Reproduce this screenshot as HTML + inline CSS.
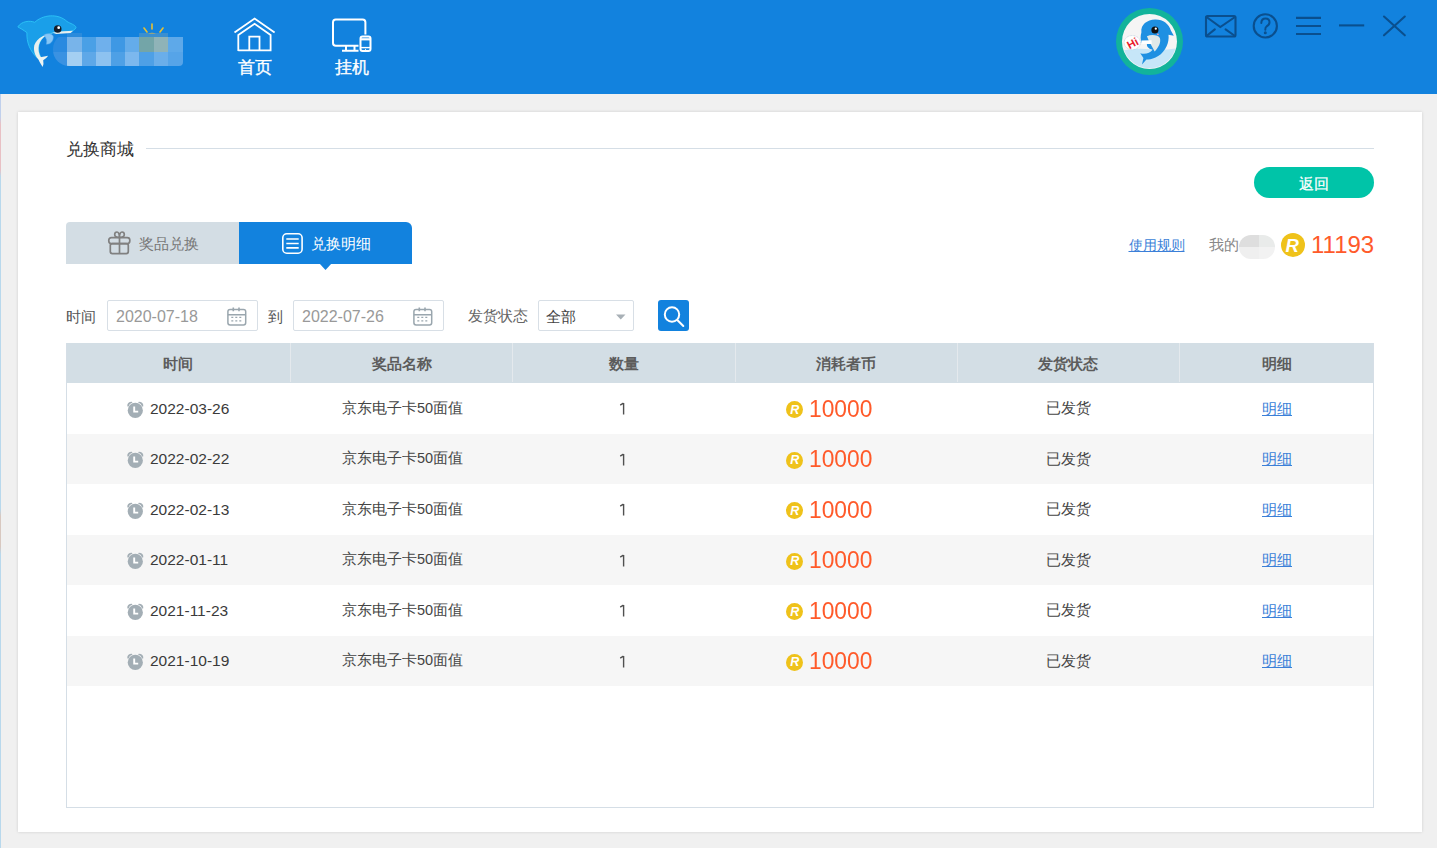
<!DOCTYPE html><html><head><meta charset="utf-8"><style>
*{box-sizing:border-box;margin:0;padding:0}
html,body{width:1437px;height:848px;overflow:hidden;background:#f0f0f0;font-family:"Liberation Sans",sans-serif;color:#333}
#hdr{position:absolute;left:0;top:0;width:1437px;height:94px;background:#1282de}
#card{position:absolute;left:18px;top:112px;width:1404px;height:720px;background:#fff;box-shadow:0 0 3px rgba(0,0,0,.14)}
.t{position:absolute;white-space:nowrap;line-height:1}
.a{position:absolute}
svg{position:absolute;overflow:visible}
.tbl{position:absolute;left:66px;top:343px;width:1308px;height:465px;border:1px solid #d5dee6;border-top:none;background:#fff;overflow:hidden}
.th{position:absolute;left:-1px;top:0;width:1308px;height:40px;background:#d3dee5}
.sep{position:absolute;top:0;width:1px;height:39px;background:#e4e9ed}
.hc{position:absolute;top:1px;height:40px;line-height:40px;text-align:center;font-size:14.6px;font-weight:bold;color:#5c5c5c}
.row{position:absolute;left:-1px;width:1308px}
.mz{position:absolute;top:37px;height:15px;width:15px}
</style></head><body>
<div id="hdr"></div>
<div class="a" style="left:0;top:94px;width:1px;height:754px;background:linear-gradient(#c0d0ec 0,#c0d0ec 3%,#e8c0c4 4%,#e8c0c4 10%,#b8d8ec 11%,#b8d8ec 55%,#d8c8c0 56%,#d8c8c0 60%,#b8d8ec 61%)"></div>
<div class="a" style="left:53px;top:33px;width:130px;height:33px;border-radius:16px 4px 4px 16px;overflow:hidden">
<div class="a" style="left:0px;top:4px;width:14px;height:15px;background:#2a8ae0"></div>
<div class="a" style="left:0px;top:19px;width:14px;height:14px;background:#3a92e2"></div>
<div class="a" style="left:14px;top:4px;width:15px;height:15px;background:#78b4ea"></div>
<div class="a" style="left:14px;top:19px;width:15px;height:14px;background:#a4cff2"></div>
<div class="a" style="left:29px;top:4px;width:14px;height:15px;background:#4aa0e6"></div>
<div class="a" style="left:29px;top:19px;width:14px;height:14px;background:#5ea8e8"></div>
<div class="a" style="left:43px;top:4px;width:15px;height:15px;background:#6fb0ec"></div>
<div class="a" style="left:43px;top:19px;width:15px;height:14px;background:#8dc2f0"></div>
<div class="a" style="left:58px;top:4px;width:14px;height:15px;background:#3e98e4"></div>
<div class="a" style="left:58px;top:19px;width:14px;height:14px;background:#4ea0e6"></div>
<div class="a" style="left:72px;top:4px;width:14px;height:15px;background:#64acea"></div>
<div class="a" style="left:72px;top:19px;width:14px;height:14px;background:#7cb8ee"></div>
<div class="a" style="left:86px;top:4px;width:15px;height:15px;background:#73a5a8"></div>
<div class="a" style="left:86px;top:19px;width:15px;height:14px;background:#4ea0e6"></div>
<div class="a" style="left:101px;top:4px;width:14px;height:15px;background:#8fb3b8"></div>
<div class="a" style="left:101px;top:19px;width:14px;height:14px;background:#6aaeea"></div>
<div class="a" style="left:115px;top:4px;width:15px;height:15px;background:#5ea9e9"></div>
<div class="a" style="left:115px;top:19px;width:15px;height:14px;background:#56a4e8"></div>
<div class="a" style="left:14px;top:0;width:15px;height:4px;background:#2b8bdc"></div>
<div class="a" style="left:86px;top:0;width:29px;height:4px;background:#3a8fd0"></div>
</div>
<svg style="left:140px;top:21px" width="30" height="20" viewBox="0 0 30 20"><g stroke="#e8c030" stroke-width="1.6" stroke-linecap="round"><line x1="12" y1="3" x2="12" y2="8"/><line x1="4" y1="7" x2="7" y2="11"/><line x1="20" y1="11" x2="23" y2="7"/></g><path d="M8 13 Q12 10 16 13" fill="#d0b050" opacity=".6"/></svg>
<svg style="left:10px;top:5px" width="90" height="70" viewBox="0 0 1090 848"><path d="M95 265 C140 195 240 185 300 210 C390 120 580 95 690 200 C730 225 790 240 800 270 C790 310 740 320 700 325 L540 335 C430 345 350 420 345 520 C345 590 370 630 395 660 L340 650 C240 560 200 450 205 335 C160 300 120 280 95 265 Z" fill="#1a9fe9" stroke="#2ac0f5" stroke-width="12" stroke-linejoin="round"/><path d="M750 318 L545 333 C430 345 350 420 345 520 C345 590 370 630 395 660 L355 662 C320 640 290 590 290 520 C290 430 400 350 520 338 L600 330 C650 325 700 322 750 318 Z" fill="#e8f0ee"/><path d="M335 640 L462 615 Q440 650 402 668 Q412 712 395 750 Q358 700 335 640 Z" fill="#eef4f2"/><path d="M408 365 C450 335 520 345 525 385 C525 440 490 478 440 475 C452 432 442 395 408 365 Z" fill="#86c6f6" stroke="#5aa8e8" stroke-width="6"/><path d="M520 335 L600 322 L765 312 L735 340 L560 352 Z" fill="#e8f0ee"/><circle cx="578" cy="290" r="46" fill="#141c28"/><circle cx="590" cy="275" r="17" fill="#fff"/></svg>
<svg style="left:225px;top:10px" width="60" height="50" viewBox="0 0 60 50" fill="none" stroke="#fff" stroke-width="1.8"><path d="M9.5 22.6 L29.6 8.6 L49.6 22.6"/><path d="M13.3 41 V25 L29.6 13.8 L45.6 25 V40.3 H13.3"/><path d="M24.3 40.3 V26.6 H34.5 V40.3"/></svg>
<div class="t" style="left:237.5px;top:59px;font-size:17.3px;color:#fff;-webkit-text-stroke:.35px #fff">首页</div>
<svg style="left:320px;top:10px" width="65" height="50" viewBox="0 0 65 50" fill="none" stroke="#fff" stroke-width="2"><path d="M45.4 24.5 V12.3 Q45.4 9.5 42.6 9.5 H15.8 Q13 9.5 13 12.3 V33 Q13 35.8 15.8 35.8 H38.5"/><path d="M26 36 V40.3 M34.5 36 V40.3 M22 40.8 H38.5"/><rect x="40.5" y="26.5" width="10" height="14.5" rx="2"/><path d="M40.5 29.3 H50.5" stroke-width="2.2"/><path d="M40.5 37.6 H50.5" stroke-width="1.4"/><circle cx="45.5" cy="39.3" r=".6" fill="#fff" stroke="none"/></svg>
<div class="t" style="left:334.5px;top:59px;font-size:17.3px;color:#fff;-webkit-text-stroke:.35px #fff">挂机</div>
<div class="a" style="left:1116px;top:8px;width:67px;height:67px;border-radius:50%;background:#12b39b"></div>
<div class="a" style="left:1122px;top:14px;width:55px;height:55px;border-radius:50%;background:#f5f5f5"></div>
<svg style="left:1110px;top:5px" width="80" height="75" viewBox="0 0 905 848"><defs><clipPath id="av"><circle cx="447" cy="410" r="305"/></clipPath></defs><g clip-path="url(#av)"><path d="M100 520 Q300 480 450 500 Q600 520 800 480 L800 800 L100 800 Z" fill="#c6e6f8"/></g><path d="M355 310 C345 220 420 170 510 165 C600 162 665 215 690 290 L722 348 L662 335 C672 425 630 520 545 578 C495 610 445 622 412 615 L362 672 L378 598 L342 545 C400 565 452 540 482 505 C440 500 412 472 418 442 L362 432 C340 390 345 345 355 310 Z" fill="#1e90e2"/><path d="M418 352 C470 330 550 338 565 375 C578 420 550 480 505 525 C480 470 440 420 418 352 Z" fill="#dfe9e9"/><path d="M355 402 L470 398 L472 440 L360 440 Z" fill="#fff"/><circle cx="508" cy="282" r="40" fill="#111"/><circle cx="518" cy="268" r="13" fill="#fff"/><circle cx="542" cy="332" r="10" fill="#f4a0b0"/><ellipse cx="252" cy="425" rx="92" ry="80" fill="#fff" stroke="#8fb0c8" stroke-width="5" stroke-dasharray="10 7"/><text x="190" y="478" font-family="Liberation Sans" font-weight="bold" font-size="125" fill="#e81c2c" transform="rotate(-28 252 425)">Hi</text></svg>
<svg style="left:1195px;top:5px" width="230" height="40" viewBox="0 0 230 40" fill="none" stroke="#0a4f8e" stroke-width="2.1" stroke-linecap="round"><rect x="11" y="11" width="29.5" height="20.5" rx="1.5"/><path d="M11.5 12 L25.3 22 L40 12 M11.5 31 L19.8 24.4 M40 31 L30.6 24.4"/><circle cx="70.3" cy="20.9" r="11.6"/><path d="M66.3 18 Q66.5 13.5 70.5 13.5 Q74.5 13.5 74.5 17.3 Q74.5 20 71.5 21.5 Q70.3 22.3 70.3 24.8" stroke-width="2"/><circle cx="70.3" cy="27.8" r="0.6" fill="#0a4f8e" stroke-width="1.8"/><path d="M101 12.9 H126 M101 21 H126 M101 29 H126" stroke-linecap="butt"/><path d="M144 20.4 H169.2" stroke-linecap="butt"/><path d="M189 11.5 L209.8 30.3 M209.8 11.5 L189 30.3"/></svg>
<div id="card"></div>
<div class="t" style="left:66px;top:141px;font-size:16.5px;color:#333">兑换商城</div>
<div class="a" style="left:146px;top:148px;width:1228px;height:1px;background:#d5dee6"></div>
<div class="a" style="left:1254px;top:167px;width:120px;height:31px;border-radius:16px;background:#00c4a8"></div>
<div class="t" style="left:1299px;top:177px;font-size:14.6px;color:#fff;-webkit-text-stroke:.25px #fff">返回</div>
<div class="a" style="left:66px;top:222px;width:173px;height:42px;background:#d3dde4;border-radius:4px 0 0 0"></div>
<div class="a" style="left:239px;top:222px;width:173px;height:42px;background:#1282de;border-radius:0 6px 0 0"></div>
<svg style="left:319px;top:263px" width="13" height="7" viewBox="0 0 13 7"><path d="M0 0 H13 L6.5 7 Z" fill="#1282de"/></svg>
<svg style="left:105px;top:229px" width="30" height="28" viewBox="0 0 30 28" fill="none" stroke="#808080" stroke-width="1.7"><rect x="3.8" y="8.6" width="21" height="6" rx="2.5"/><rect x="5.3" y="14.6" width="18" height="10" rx="2"/><path d="M14.5 8.6 V24.6"/><path d="M14.3 8.4 C11 8.4 9.7 7 9.7 5.5 C9.7 3.8 11 3 12 3 C13.6 3 14.3 4.5 14.4 8.4 C14.6 4.5 15.4 3 17 3 C18 3 19.3 3.8 19.3 5.5 C19.3 7 18 8.4 14.6 8.4"/></svg>
<div class="t" style="left:139px;top:236px;font-size:15px;color:#777">奖品兑换</div>
<svg style="left:280px;top:231px" width="26" height="26" viewBox="0 0 26 26" fill="none" stroke="#fff" stroke-width="1.6"><rect x="2.8" y="2.8" width="19.3" height="19.4" rx="4"/><path d="M6.3 8 H18.7 M6.3 12.5 H18.7 M6.3 16.8 H18.7" stroke-width="1.7"/></svg>
<div class="t" style="left:311px;top:236px;font-size:15px;color:#fff">兑换明细</div>
<div class="t" style="left:1128.5px;top:237.5px;font-size:14.2px;color:#3b7fd8;text-decoration:underline">使用规则</div>
<div class="t" style="left:1209px;top:237px;font-size:15.3px;color:#888">我的</div>
<div class="a" style="left:1239px;top:235px;width:36px;height:24px;border-radius:12px;overflow:hidden;filter:blur(.6px)"><div class="a" style="left:0;top:0;width:20px;height:12px;background:#dedede"></div><div class="a" style="left:20px;top:0;width:16px;height:12px;background:#e9ebea"></div><div class="a" style="left:0;top:12px;width:20px;height:12px;background:#efefef"></div><div class="a" style="left:20px;top:12px;width:16px;height:12px;background:#f2f2f2"></div></div>
<div class="a" style="left:1281px;top:233px;width:24px;height:24px;border-radius:50%;background:#efc21a"></div>
<div class="t" style="left:1285.5px;top:236.5px;font-size:18.5px;color:#fff;font-weight:bold;font-style:italic">R</div>
<div class="t" style="left:1311px;top:232.5px;font-size:24px;color:#ff5a2a">11193</div>
<div class="t" style="left:66px;top:308.5px;font-size:15px;color:#555">时间</div>
<div class="a" style="left:107px;top:300px;width:151px;height:31px;border:1px solid #d8dfe6;border-radius:2px;background:#fff"></div>
<div class="t" style="left:116px;top:308.5px;font-size:16px;color:#999">2020-07-18</div>
<svg style="left:227px;top:307px" width="20" height="19" viewBox="0 0 20 19" fill="none" stroke="#9aa6ae" stroke-width="1.5"><rect x="0.9" y="2.4" width="17.8" height="15.6" rx="2.2"/><path d="M0.9 7.8 H18.7 M6.3 0.5 V4.2 M12 0.5 V4.2" stroke-width="1.6"/><path d="M4.3 10.4 H6.3 M8.3 10.4 H10.3 M12.3 10.4 H14.3 M4.3 13.8 H6.3 M8.3 13.8 H10.3 M12.3 13.8 H14.3" stroke-width="1.3"/></svg>
<div class="a" style="left:293px;top:300px;width:151px;height:31px;border:1px solid #d8dfe6;border-radius:2px;background:#fff"></div>
<div class="t" style="left:302px;top:308.5px;font-size:16px;color:#999">2022-07-26</div>
<svg style="left:413px;top:307px" width="20" height="19" viewBox="0 0 20 19" fill="none" stroke="#9aa6ae" stroke-width="1.5"><rect x="0.9" y="2.4" width="17.8" height="15.6" rx="2.2"/><path d="M0.9 7.8 H18.7 M6.3 0.5 V4.2 M12 0.5 V4.2" stroke-width="1.6"/><path d="M4.3 10.4 H6.3 M8.3 10.4 H10.3 M12.3 10.4 H14.3 M4.3 13.8 H6.3 M8.3 13.8 H10.3 M12.3 13.8 H14.3" stroke-width="1.3"/></svg>
<div class="t" style="left:268px;top:308.5px;font-size:15px;color:#555">到</div>
<div class="t" style="left:468px;top:308.5px;font-size:14.8px;color:#666">发货状态</div>
<div class="a" style="left:538px;top:300px;width:96px;height:31px;border:1px solid #d8dfe6;border-radius:2px;background:#fff"></div>
<div class="t" style="left:546px;top:308.5px;font-size:15px;color:#444">全部</div>
<svg style="left:616px;top:314px" width="10" height="6" viewBox="0 0 10 6"><path d="M0 0.5 H9.5 L4.75 5.5 Z" fill="#a8b0b6"/></svg>
<div class="a" style="left:658px;top:300px;width:31px;height:31px;border-radius:3px;background:#1282de"></div>
<svg style="left:658px;top:300px" width="31" height="31" viewBox="0 0 31 31" fill="none" stroke="#fff" stroke-width="2" stroke-linecap="round"><circle cx="14" cy="14.5" r="7.2"/><path d="M19.3 20 L25.3 26"/></svg>
<div class="tbl">
<div class="th">
<div class="hc" style="left:0px;width:224px">时间</div>
<div class="hc" style="left:224px;width:223px">奖品名称</div>
<div class="sep" style="left:224px"></div>
<div class="hc" style="left:446px;width:223px">数量</div>
<div class="sep" style="left:446px"></div>
<div class="hc" style="left:669px;width:222px">消耗者币</div>
<div class="sep" style="left:669px"></div>
<div class="hc" style="left:891px;width:222px">发货状态</div>
<div class="sep" style="left:891px"></div>
<div class="hc" style="left:1113px;width:195px">明细</div>
<div class="sep" style="left:1113px"></div>
</div>
<div class="row" style="top:40.0px;height:50.5px;background:#fff">
<svg style="left:59.5px;top:16.5px" width="19" height="19" viewBox="0 0 19 19"><circle cx="9.3" cy="10.4" r="7.6" fill="#a3aeb5"/><path d="M1.3 6.2 Q1 1.8 5.8 1.7 Q6.6 2.1 6.2 2.8 Q3.3 3.5 2.6 6.4 Q2 6.9 1.3 6.2 Z M17.3 6.2 Q17.6 1.8 12.8 1.7 Q12 2.1 12.4 2.8 Q15.3 3.5 16 6.4 Q16.6 6.9 17.3 6.2 Z" fill="#a3aeb5"/><path d="M8.2 6.6 V11.6 H12.2" fill="none" stroke="#fff" stroke-width="1.9"/></svg>
<div class="t" style="left:84px;top:17.5px;font-size:15.5px;color:#3a3a3a">2022-03-26</div>
<div class="t" style="left:276px;top:17.5px;font-size:14.5px;color:#444">京东电子卡50面值</div>
<svg style="left:552px;top:19px" width="10" height="14" viewBox="0 0 10 14"><path d="M5.6 1 V12.4 M5.4 1.2 L2.2 3.2" fill="none" stroke="#505050" stroke-width="1.4"/></svg>
<div class="a" style="left:720px;top:18px;width:17px;height:17px;border-radius:50%;background:#efc21a"></div>
<div class="t" style="left:724.3px;top:20.5px;font-size:12.5px;color:#fff;font-weight:bold;font-style:italic">R</div>
<div class="t" style="left:743px;top:13.5px;font-size:24px;transform:scaleX(.95);transform-origin:0 0;color:#ff5a2a">10000</div>
<div class="t" style="left:980px;top:18px;font-size:14.7px;color:#444">已发货</div>
<div class="t" style="left:1196px;top:17.5px;font-size:15px;color:#3b7fd8;text-decoration:underline">明细</div>
</div>
<div class="row" style="top:90.5px;height:50.5px;background:#f6f6f6">
<svg style="left:59.5px;top:16.5px" width="19" height="19" viewBox="0 0 19 19"><circle cx="9.3" cy="10.4" r="7.6" fill="#a3aeb5"/><path d="M1.3 6.2 Q1 1.8 5.8 1.7 Q6.6 2.1 6.2 2.8 Q3.3 3.5 2.6 6.4 Q2 6.9 1.3 6.2 Z M17.3 6.2 Q17.6 1.8 12.8 1.7 Q12 2.1 12.4 2.8 Q15.3 3.5 16 6.4 Q16.6 6.9 17.3 6.2 Z" fill="#a3aeb5"/><path d="M8.2 6.6 V11.6 H12.2" fill="none" stroke="#fff" stroke-width="1.9"/></svg>
<div class="t" style="left:84px;top:17.5px;font-size:15.5px;color:#3a3a3a">2022-02-22</div>
<div class="t" style="left:276px;top:17.5px;font-size:14.5px;color:#444">京东电子卡50面值</div>
<svg style="left:552px;top:19px" width="10" height="14" viewBox="0 0 10 14"><path d="M5.6 1 V12.4 M5.4 1.2 L2.2 3.2" fill="none" stroke="#505050" stroke-width="1.4"/></svg>
<div class="a" style="left:720px;top:18px;width:17px;height:17px;border-radius:50%;background:#efc21a"></div>
<div class="t" style="left:724.3px;top:20.5px;font-size:12.5px;color:#fff;font-weight:bold;font-style:italic">R</div>
<div class="t" style="left:743px;top:13.5px;font-size:24px;transform:scaleX(.95);transform-origin:0 0;color:#ff5a2a">10000</div>
<div class="t" style="left:980px;top:18px;font-size:14.7px;color:#444">已发货</div>
<div class="t" style="left:1196px;top:17.5px;font-size:15px;color:#3b7fd8;text-decoration:underline">明细</div>
</div>
<div class="row" style="top:141.0px;height:50.5px;background:#fff">
<svg style="left:59.5px;top:16.5px" width="19" height="19" viewBox="0 0 19 19"><circle cx="9.3" cy="10.4" r="7.6" fill="#a3aeb5"/><path d="M1.3 6.2 Q1 1.8 5.8 1.7 Q6.6 2.1 6.2 2.8 Q3.3 3.5 2.6 6.4 Q2 6.9 1.3 6.2 Z M17.3 6.2 Q17.6 1.8 12.8 1.7 Q12 2.1 12.4 2.8 Q15.3 3.5 16 6.4 Q16.6 6.9 17.3 6.2 Z" fill="#a3aeb5"/><path d="M8.2 6.6 V11.6 H12.2" fill="none" stroke="#fff" stroke-width="1.9"/></svg>
<div class="t" style="left:84px;top:17.5px;font-size:15.5px;color:#3a3a3a">2022-02-13</div>
<div class="t" style="left:276px;top:17.5px;font-size:14.5px;color:#444">京东电子卡50面值</div>
<svg style="left:552px;top:19px" width="10" height="14" viewBox="0 0 10 14"><path d="M5.6 1 V12.4 M5.4 1.2 L2.2 3.2" fill="none" stroke="#505050" stroke-width="1.4"/></svg>
<div class="a" style="left:720px;top:18px;width:17px;height:17px;border-radius:50%;background:#efc21a"></div>
<div class="t" style="left:724.3px;top:20.5px;font-size:12.5px;color:#fff;font-weight:bold;font-style:italic">R</div>
<div class="t" style="left:743px;top:13.5px;font-size:24px;transform:scaleX(.95);transform-origin:0 0;color:#ff5a2a">10000</div>
<div class="t" style="left:980px;top:18px;font-size:14.7px;color:#444">已发货</div>
<div class="t" style="left:1196px;top:17.5px;font-size:15px;color:#3b7fd8;text-decoration:underline">明细</div>
</div>
<div class="row" style="top:191.5px;height:50.5px;background:#f6f6f6">
<svg style="left:59.5px;top:16.5px" width="19" height="19" viewBox="0 0 19 19"><circle cx="9.3" cy="10.4" r="7.6" fill="#a3aeb5"/><path d="M1.3 6.2 Q1 1.8 5.8 1.7 Q6.6 2.1 6.2 2.8 Q3.3 3.5 2.6 6.4 Q2 6.9 1.3 6.2 Z M17.3 6.2 Q17.6 1.8 12.8 1.7 Q12 2.1 12.4 2.8 Q15.3 3.5 16 6.4 Q16.6 6.9 17.3 6.2 Z" fill="#a3aeb5"/><path d="M8.2 6.6 V11.6 H12.2" fill="none" stroke="#fff" stroke-width="1.9"/></svg>
<div class="t" style="left:84px;top:17.5px;font-size:15.5px;color:#3a3a3a">2022-01-11</div>
<div class="t" style="left:276px;top:17.5px;font-size:14.5px;color:#444">京东电子卡50面值</div>
<svg style="left:552px;top:19px" width="10" height="14" viewBox="0 0 10 14"><path d="M5.6 1 V12.4 M5.4 1.2 L2.2 3.2" fill="none" stroke="#505050" stroke-width="1.4"/></svg>
<div class="a" style="left:720px;top:18px;width:17px;height:17px;border-radius:50%;background:#efc21a"></div>
<div class="t" style="left:724.3px;top:20.5px;font-size:12.5px;color:#fff;font-weight:bold;font-style:italic">R</div>
<div class="t" style="left:743px;top:13.5px;font-size:24px;transform:scaleX(.95);transform-origin:0 0;color:#ff5a2a">10000</div>
<div class="t" style="left:980px;top:18px;font-size:14.7px;color:#444">已发货</div>
<div class="t" style="left:1196px;top:17.5px;font-size:15px;color:#3b7fd8;text-decoration:underline">明细</div>
</div>
<div class="row" style="top:242.0px;height:50.5px;background:#fff">
<svg style="left:59.5px;top:16.5px" width="19" height="19" viewBox="0 0 19 19"><circle cx="9.3" cy="10.4" r="7.6" fill="#a3aeb5"/><path d="M1.3 6.2 Q1 1.8 5.8 1.7 Q6.6 2.1 6.2 2.8 Q3.3 3.5 2.6 6.4 Q2 6.9 1.3 6.2 Z M17.3 6.2 Q17.6 1.8 12.8 1.7 Q12 2.1 12.4 2.8 Q15.3 3.5 16 6.4 Q16.6 6.9 17.3 6.2 Z" fill="#a3aeb5"/><path d="M8.2 6.6 V11.6 H12.2" fill="none" stroke="#fff" stroke-width="1.9"/></svg>
<div class="t" style="left:84px;top:17.5px;font-size:15.5px;color:#3a3a3a">2021-11-23</div>
<div class="t" style="left:276px;top:17.5px;font-size:14.5px;color:#444">京东电子卡50面值</div>
<svg style="left:552px;top:19px" width="10" height="14" viewBox="0 0 10 14"><path d="M5.6 1 V12.4 M5.4 1.2 L2.2 3.2" fill="none" stroke="#505050" stroke-width="1.4"/></svg>
<div class="a" style="left:720px;top:18px;width:17px;height:17px;border-radius:50%;background:#efc21a"></div>
<div class="t" style="left:724.3px;top:20.5px;font-size:12.5px;color:#fff;font-weight:bold;font-style:italic">R</div>
<div class="t" style="left:743px;top:13.5px;font-size:24px;transform:scaleX(.95);transform-origin:0 0;color:#ff5a2a">10000</div>
<div class="t" style="left:980px;top:18px;font-size:14.7px;color:#444">已发货</div>
<div class="t" style="left:1196px;top:17.5px;font-size:15px;color:#3b7fd8;text-decoration:underline">明细</div>
</div>
<div class="row" style="top:292.5px;height:50.5px;background:#f6f6f6">
<svg style="left:59.5px;top:16.5px" width="19" height="19" viewBox="0 0 19 19"><circle cx="9.3" cy="10.4" r="7.6" fill="#a3aeb5"/><path d="M1.3 6.2 Q1 1.8 5.8 1.7 Q6.6 2.1 6.2 2.8 Q3.3 3.5 2.6 6.4 Q2 6.9 1.3 6.2 Z M17.3 6.2 Q17.6 1.8 12.8 1.7 Q12 2.1 12.4 2.8 Q15.3 3.5 16 6.4 Q16.6 6.9 17.3 6.2 Z" fill="#a3aeb5"/><path d="M8.2 6.6 V11.6 H12.2" fill="none" stroke="#fff" stroke-width="1.9"/></svg>
<div class="t" style="left:84px;top:17.5px;font-size:15.5px;color:#3a3a3a">2021-10-19</div>
<div class="t" style="left:276px;top:17.5px;font-size:14.5px;color:#444">京东电子卡50面值</div>
<svg style="left:552px;top:19px" width="10" height="14" viewBox="0 0 10 14"><path d="M5.6 1 V12.4 M5.4 1.2 L2.2 3.2" fill="none" stroke="#505050" stroke-width="1.4"/></svg>
<div class="a" style="left:720px;top:18px;width:17px;height:17px;border-radius:50%;background:#efc21a"></div>
<div class="t" style="left:724.3px;top:20.5px;font-size:12.5px;color:#fff;font-weight:bold;font-style:italic">R</div>
<div class="t" style="left:743px;top:13.5px;font-size:24px;transform:scaleX(.95);transform-origin:0 0;color:#ff5a2a">10000</div>
<div class="t" style="left:980px;top:18px;font-size:14.7px;color:#444">已发货</div>
<div class="t" style="left:1196px;top:17.5px;font-size:15px;color:#3b7fd8;text-decoration:underline">明细</div>
</div>
</div>
</body></html>
